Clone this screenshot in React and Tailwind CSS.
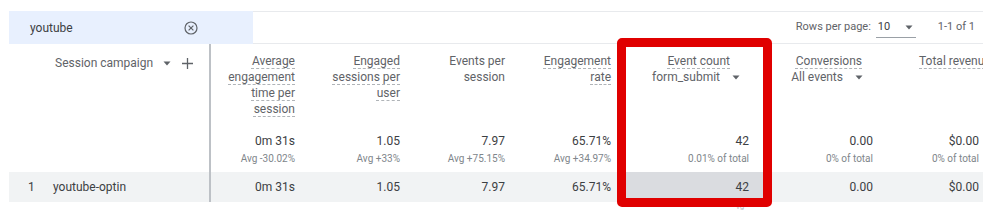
import React from "react";

const Dash = ({ children }) => (
  <span className="underline decoration-dashed decoration-[#b0b4b8] decoration-1 underline-offset-[3px]">
    {children}
  </span>
);

const Caret = ({ className = "" }) => (
  <svg width="8" height="5" viewBox="0 0 8 5" className={className}>
    <path d="M0.5 0.5 L7.5 0.5 L4 4.5 Z" fill="#5f6368" />
  </svg>
);

const cols = [
  { w: "w-[92px]", pr: "pr-[8px]" },
  { w: "w-[105px]", pr: "pr-[8px]" },
  { w: "w-[105px]", pr: "pr-[8px]" },
  { w: "w-[106px]", pr: "pr-[8px]" },
  { w: "w-[144px]", pr: "pr-[14px]" },
  { w: "w-[118px]", pr: "pr-[8px]" },
  { w: "w-[106px]", pr: "pr-[8px]" },
];

const totals = [
  ["0m 31s", "Avg -30.02%"],
  ["1.05", "Avg +33%"],
  ["7.97", "Avg +75.15%"],
  ["65.71%", "Avg +34.97%"],
  ["42", "0.01% of total"],
  ["0.00", "0% of total"],
  ["$0.00", "0% of total"],
];

const row = ["0m 31s", "1.05", "7.97", "65.71%", "42", "0.00", "$0.00"];

export default function App() {
  return (
    <div
      className="relative w-[1000px] h-[212px] overflow-hidden bg-white text-[#3c4043]"
      style={{ fontFamily: "Roboto, 'Liberation Sans', Arial, sans-serif" }}
    >
      <div className="ml-[9px] mt-[11px] w-[974px] overflow-hidden">
        {/* top bar */}
        <div className="flex h-[33px]">
          <div className="w-[244px] shrink-0 bg-[#e8f0fe] flex items-center pl-[21px] pr-[55px] justify-between">
            <span className="text-[12px] text-[#3c4043]">youtube</span>
            <svg width="14" height="14" viewBox="0 0 14 14">
              <circle cx="7" cy="7" r="6" fill="none" stroke="#5f6368" strokeWidth="1.2" />
              <path d="M4.6 4.6 L9.4 9.4 M9.4 4.6 L4.6 9.4" stroke="#5f6368" strokeWidth="1.2" />
            </svg>
          </div>
          <div className="flex-1 border-t border-b border-[#e8eaed] flex items-center justify-end text-[11px] text-[#5f6368] pr-[8px]">
            <span>Rows per page:</span>
            <div className="ml-[5px] w-[40px] h-[20px] flex items-center justify-between border-b border-[#9aa0a6] pl-[2px] pr-[3px]">
              <span className="text-[#3c4043]">10</span>
              <Caret />
            </div>
            <span className="ml-[22px]">1-1 of 1</span>
          </div>
        </div>

        {/* header row */}
        <div className="flex h-[88px]">
          <div className="w-[200px] shrink-0 flex items-start pt-[11px] pl-[46px] text-[12px] text-[#5f6368] leading-4">
            <span>Session campaign</span>
            <Caret className="ml-[10px] mt-[6px]" />
            <svg width="11" height="11" viewBox="0 0 11 11" className="ml-[11px] mt-[3px]">
              <path d="M5.5 0 V11 M0 5.5 H11" stroke="#5f6368" strokeWidth="1.3" />
            </svg>
          </div>
          <div className="w-[2px] shrink-0 bg-[#bdc1c6]" />
          <div className={`${cols[0].w} ${cols[0].pr} shrink-0 pt-[9px] text-right text-[12px] leading-4 text-[#5f6368]`}>
            <div><Dash>Average</Dash></div>
            <div><Dash>engagement</Dash></div>
            <div><Dash>time per</Dash></div>
            <div><Dash>session</Dash></div>
          </div>
          <div className={`${cols[1].w} ${cols[1].pr} shrink-0 pt-[9px] text-right text-[12px] leading-4 text-[#5f6368]`}>
            <div><Dash>Engaged</Dash></div>
            <div><Dash>sessions per</Dash></div>
            <div><Dash>user</Dash></div>
          </div>
          <div className={`${cols[2].w} ${cols[2].pr} shrink-0 pt-[9px] text-right text-[12px] leading-4 text-[#5f6368]`}>
            <div>Events per</div>
            <div>session</div>
          </div>
          <div className={`${cols[3].w} ${cols[3].pr} shrink-0 pt-[9px] text-right text-[12px] leading-4 text-[#5f6368]`}>
            <div><Dash>Engagement</Dash></div>
            <div><Dash>rate</Dash></div>
          </div>
          <div className={`${cols[4].w} shrink-0 pt-[9px] flex flex-col items-end text-[12px] leading-4 text-[#5f6368]`}>
            <div className="mr-[33px]"><Dash>Event count</Dash></div>
            <div className="mr-[23px] flex items-center">
              <span>form_submit</span>
              <Caret className="ml-[12px]" />
            </div>
          </div>
          <div className={`${cols[5].w} shrink-0 pt-[9px] flex flex-col items-end text-[12px] leading-4 text-[#5f6368]`}>
            <div className="mr-[19px]"><Dash>Conversions</Dash></div>
            <div className="mr-[18px] flex items-center">
              <span>All events</span>
              <Caret className="ml-[12px]" />
            </div>
          </div>
          <div className={`${cols[6].w} shrink-0 pt-[9px] pl-[38px] text-[12px] leading-4 text-[#5f6368] whitespace-nowrap`}>
            <Dash>Total revenue</Dash>
          </div>
        </div>

        {/* totals row */}
        <div className="flex h-[40px]">
          <div className="w-[200px] shrink-0" />
          <div className="w-[2px] shrink-0 bg-[#bdc1c6]" />
          {totals.map((t, i) => (
            <div key={i} className={`${cols[i].w} ${cols[i].pr} shrink-0 pt-[1px] text-right`}>
              <div className="text-[12px] leading-4 text-[#3c4043]">{t[0]}</div>
              <div className="mt-[3px] text-[10px] leading-[14px] text-[#80868b]">{t[1]}</div>
            </div>
          ))}
        </div>

        {/* data row */}
        <div className="flex h-[30px] bg-[#f1f3f4]">
          <div className="w-[200px] shrink-0 flex items-center text-[12px] text-[#3c4043]">
            <span className="pl-[19px] w-[44px]">1</span>
            <span>youtube-optin</span>
          </div>
          <div className="w-[2px] shrink-0 bg-[#bdc1c6]" />
          {row.map((v, i) => (
            <div
              key={i}
              className={`${cols[i].w} ${cols[i].pr} shrink-0 flex items-center justify-end text-[12px] text-[#3c4043] ${i === 4 ? "bg-[#dadce0]" : ""}`}
            >
              {v}
            </div>
          ))}
        </div>
      </div>

      {/* faint text below */}
      <div className="absolute left-[736px] top-[203px] text-[8px] text-[#bdc1c6] leading-none">vg</div>

      {/* red annotation box */}
      <div className="absolute left-[617px] top-[38px] w-[155px] h-[169px] border-[9px] border-[#e00000] rounded-[5px]" />
    </div>
  );
}
